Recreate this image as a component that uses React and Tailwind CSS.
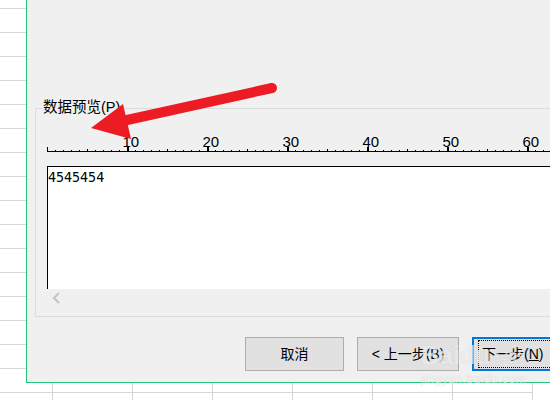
export default function App() {
  const ticks = [];
  for (let i = 0; i <= 64; i++) {
    const x = i * 8;
    if (i % 10 === 0)
      ticks.push(<rect key={i} x={x} y={15} width={i === 0 ? 1 : 2} height={4} fill="#000" />);
    else if (i % 5 === 0)
      ticks.push(<rect key={i} x={x} y={17} width={1} height={2} fill="#000" />);
    else ticks.push(<rect key={i} x={x} y={18} width={1} height={1} fill="#000" />);
  }
  const labels = [10, 20, 30, 40, 50, 60];
  const gutterRows = Array.from({ length: 15 });
  const bottomCells = Array.from({ length: 6 });

  return (
    <div className="relative w-[550px] h-[400px] overflow-hidden bg-white flex flex-col font-['Liberation_Sans','Noto_Sans_CJK_SC',sans-serif] text-black">
      <div className="flex h-[383px] shrink-0">
        {/* spreadsheet gutter */}
        <div className="w-[26px] shrink-0 flex flex-col">
          <div className="h-[9px] border-b border-[#d6d6d6]" />
          {gutterRows.map((_, i) => (
            <div key={i} className="h-[24px] border-b border-[#d6d6d6]" />
          ))}
        </div>
        {/* dialog */}
        <div className="flex-1 min-w-0 border-l border-b border-[#21c47a] bg-[#f0f0f0] overflow-hidden flex flex-col items-start">
          <div className="relative mt-[108px] ml-[8px] w-[540px] h-[209px] shrink-0 border border-[#dcdcdc] flex flex-col">
            <div className="absolute left-[7px] top-[-10px] bg-[#f0f0f0] text-[14.5px] leading-[16px]">
              数据预览(P)
            </div>
            <svg width="520" height="20" className="block ml-[11px] mt-[23px]">
              <rect x="0" y="19" width="520" height="1" fill="#000" />
              {ticks}
              {labels.map((n) => (
                <text
                  key={n}
                  x={(n * 8) - 4.5}
                  y={15.3}
                  fontSize="15"
                  fontFamily="Liberation Sans, sans-serif"
                  fill="#000"
                >
                  {n}
                </text>
              ))}
            </svg>
            <div className="ml-[11px] mt-[14px] w-[520px] h-[123px] shrink-0 border-t border-l border-black bg-white pt-[3px] font-['DejaVu_Sans_Mono',monospace] text-[13.33px] leading-[16px]">
              4545454
            </div>
            <div className="ml-[11px] h-[17px] flex items-center">
              <svg width="17" height="17" className="block">
                <polyline points="12,4 7,9 12,14" fill="none" stroke="#c4c4c4" strokeWidth="2" />
              </svg>
            </div>
          </div>
          <div className="mt-[20px] ml-[218px] flex gap-[13px] shrink-0 text-[14px]">
            <div className="w-[99px] h-[34px] shrink-0 border border-[#adadad] bg-[#e1e1e1] flex items-center justify-center">
              取消
            </div>
            <div className="w-[102px] h-[34px] shrink-0 border border-[#adadad] bg-[#e1e1e1] flex items-center justify-center">
              &lt; 上一步(B)
            </div>
            <div className="relative w-[102px] h-[34px] shrink-0 border-2 border-[#0078d7] bg-[#e1e1e1] flex items-center pl-[8px]">
              <div className="absolute inset-x-[4px] inset-y-[1px] border border-dotted border-black" />
              下一步(<span className="underline">N</span>)
            </div>
          </div>
        </div>
      </div>
      {/* bottom spreadsheet strip */}
      <div className="flex h-[17px] shrink-0">
        <div className="w-[53px] shrink-0 border-r border-[#d6d6d6]">
          <div className="h-[10px] border-b border-[#d6d6d6]" />
        </div>
        {bottomCells.map((_, i) => (
          <div key={i} className="w-[80px] shrink-0 border-r border-[#d6d6d6]">
            <div className="h-[10px] border-b border-[#d6d6d6]" />
          </div>
        ))}
      </div>

      {/* watermark */}
      <div className="absolute left-[421px] top-[328px] pointer-events-none text-white/60 [text-shadow:0_0_1px_rgba(150,150,150,0.35)]">
        <div className="flex items-end">
          <span className="text-[25px] font-bold leading-[26px] mt-[14px]">Baidu</span>
          <span className="text-[15px] leading-[18px] ml-[4px]">经验</span>
        </div>
        <div className="text-[12px] leading-[14px] mt-[4px] tracking-[0.5px]">jingyan.baidu.com</div>
      </div>

      {/* red annotation arrow */}
      <svg width="550" height="400" className="absolute left-0 top-0 pointer-events-none">
        <line x1="272" y1="88" x2="118" y2="122" stroke="#ed1c24" strokeWidth="10" strokeLinecap="round" />
        <polygon points="91,128 123,104 131,139" fill="#ed1c24" />
      </svg>
    </div>
  );
}
